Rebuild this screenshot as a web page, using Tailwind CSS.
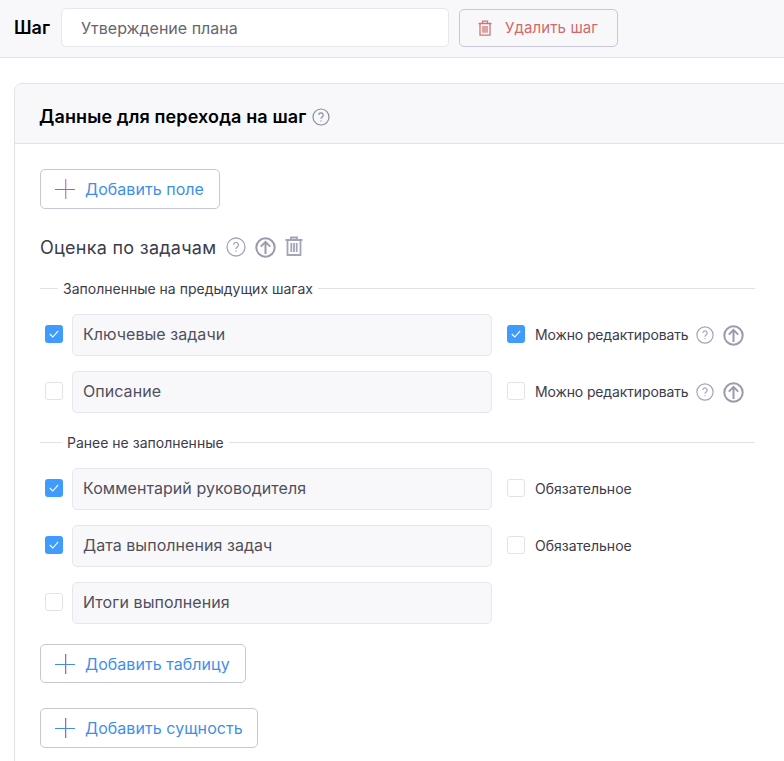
<!DOCTYPE html>
<html lang="ru">
<head>
    <meta charset="UTF-8">
    <title>Шаг</title>
    <script src="https://cdn.jsdelivr.net/npm/@tailwindcss/browser@4"></script>
</head>
<body class="bg-white font-['Inter',sans-serif] text-[#3c3c4a]">
<div class="w-[784px] h-[761px] overflow-hidden">

    <!-- step header -->
    <div class="h-[58px] bg-[#f8f8fb] border-b border-[#e2e2e6] flex items-start pl-[14px] pt-[8px]">
        <span class="text-[18px] font-semibold text-black w-[47px] mt-[8px] leading-[24px]">Шаг</span>
        <div class="w-[388px] h-[39px] bg-white border border-[#e6e6ee] rounded-[5px] pl-[19px] flex items-center text-[16px] text-[#666670]">Утверждение плана</div>
        <button class="ml-[10px] mt-[1px] w-[159px] h-[38px] border border-[#c8c6d8] rounded-[5px] flex items-center pl-[18px] text-[15px] tracking-[0.1px] text-[#d06a6a]">
            <svg class="w-[14px] h-[16px] mr-[13px]" viewBox="0 0 14 16" fill="none" stroke="#cf7474" stroke-width="1.3"><path d="M.5 3.5h13M4.5 3.5V1.2h5v2.3M2 3.5v11.7h10V3.5M5 6v6.8M7 6v6.8M9 6v6.8"/></svg>
            Удалить шаг
        </button>
    </div>

    <!-- card -->
    <div class="ml-[14px] mt-[25px] w-[800px] h-[700px] border border-[#e2e2e8] rounded-t-[8px]">
        <div class="h-[60px] bg-[#f8f8fb] border-b border-[#e2e2e8] rounded-t-[8px] flex items-center pl-[24px] pt-[6px]">
            <span class="text-[18px] font-semibold tracking-[0.12px] text-black">Данные для перехода на шаг</span>
            <svg class="ml-[6px] w-[18px] h-[18px]" viewBox="0 0 18 18" fill="none" stroke="#8a8aa0" stroke-width="1.2"><circle cx="9" cy="9" r="8"/><path d="M6.8 7a2.2 2.2 0 1 1 3.4 1.9c-.8.5-1.2.9-1.2 1.8M9 12.4v1"/></svg>
        </div>

        <div class="pl-[25px] pt-[25px]">
            <button class="w-[180px] h-[40px] border border-[#c8c6d8] rounded-[5px] flex items-center pl-[14px] text-[16px] tracking-[0.05px] text-[#3f8fe8]">
                <svg class="w-[20px] h-[20px] mr-[10px]" viewBox="0 0 20 20" stroke-width="1"><path d="M10.5 0v20" stroke="#b48ad0"/><path d="M11.5 0v20" stroke="#f0d4ec"/><path d="M0 10.5h20" stroke="#3f8fe8"/></svg>
                Добавить поле
            </button>

            <div class="mt-[26px] flex items-center h-[24px]">
                <span class="text-[18px] tracking-[0.27px] text-[#3c3c4a]">Оценка по задачам</span>
                <svg class="ml-[10px] w-[20px] h-[20px]" viewBox="0 0 20 20" fill="none" stroke="#a4a4b8" stroke-width="1.3"><circle cx="10" cy="10" r="9"/><path d="M7.6 7.8a2.4 2.4 0 1 1 3.7 2.1c-.9.6-1.3 1-1.3 2M10 13.6v1.1"/></svg>
                <svg class="ml-[9px] w-[21px] h-[21px]" viewBox="0 0 21 21" fill="none" stroke="#9a9ab0" stroke-width="2"><circle cx="10.5" cy="10.5" r="9.2"/><path d="M10.5 17V5M5.8 9.6l4.7-4.7 4.7 4.7"/></svg>
                <svg class="ml-[9px] w-[18px] h-[20px] -mt-[3px]" viewBox="0 0 18 20" fill="none" stroke="#a4a4b8" stroke-width="1.8"><path d="M.5 4h17M6 4V1.5h6V4M2.5 4v15h13V4M6.3 7v9M9 7v9M11.7 7v9"/></svg>
            </div>

            <div class="mt-[23px] w-[715px] h-[12px] flex items-center text-[14px]">
                <div class="w-[18px] h-px bg-[#e2e2e8]"></div>
                <span class="px-[5px] leading-[12px] relative top-px">Заполненные на предыдущих шагах</span>
                <div class="flex-1 h-px bg-[#e2e2e8]"></div>
            </div>

            <!-- previously filled -->
            <div class="mt-[20px] flex flex-col gap-[15px]">
                <div class="flex items-center h-[42px]">
                    <div class="w-[18px] h-[18px] ml-[5px] mr-[9px] mb-[2px] rounded-[3px] bg-[#3f9bfc] flex items-center justify-center"><svg class="w-[10px] h-[8px]" viewBox="0 0 10 8" fill="none" stroke="#fff" stroke-width="1.1"><path d="M.8 4l3 3L9.2.8"/></svg></div>
                    <div class="w-[420px] h-[42px] bg-[#f8f8fb] border border-[#e6e6ee] rounded-[5px] pl-[10px] pb-[2px] flex items-center text-[16px] tracking-[0.05px] text-[#50505c]">Ключевые задачи</div>
                    <div class="w-[18px] h-[18px] ml-[15px] mr-[10px] mb-[2px] rounded-[3px] bg-[#3f9bfc] flex items-center justify-center"><svg class="w-[10px] h-[8px]" viewBox="0 0 10 8" fill="none" stroke="#fff" stroke-width="1.1"><path d="M.8 4l3 3L9.2.8"/></svg></div>
                    <span class="text-[14px] tracking-[-0.13px] mb-px">Можно редактировать</span>
                    <svg class="ml-[7px] w-[18px] h-[18px]" viewBox="0 0 20 20" fill="none" stroke="#a4a4b8" stroke-width="1.3"><circle cx="10" cy="10" r="9"/><path d="M7.6 7.8a2.4 2.4 0 1 1 3.7 2.1c-.9.6-1.3 1-1.3 2M10 13.6v1.1"/></svg>
                    <svg class="ml-[9px] w-[21px] h-[21px]" viewBox="0 0 21 21" fill="none" stroke="#9a9ab0" stroke-width="2"><circle cx="10.5" cy="10.5" r="9.2"/><path d="M10.5 17V5M5.8 9.6l4.7-4.7 4.7 4.7"/></svg>
                </div>
                <div class="flex items-center h-[42px]">
                    <div class="w-[18px] h-[18px] ml-[5px] mr-[9px] mb-[2px] rounded-[3px] bg-white border border-[#e2e2e8]"></div>
                    <div class="w-[420px] h-[42px] bg-[#f8f8fb] border border-[#e6e6ee] rounded-[5px] pl-[10px] pb-[2px] flex items-center text-[16px] tracking-[0.05px] text-[#50505c]">Описание</div>
                    <div class="w-[18px] h-[18px] ml-[15px] mr-[10px] mb-[2px] rounded-[3px] bg-white border border-[#e2e2e8]"></div>
                    <span class="text-[14px] tracking-[-0.13px] mb-px">Можно редактировать</span>
                    <svg class="ml-[7px] w-[18px] h-[18px]" viewBox="0 0 20 20" fill="none" stroke="#a4a4b8" stroke-width="1.3"><circle cx="10" cy="10" r="9"/><path d="M7.6 7.8a2.4 2.4 0 1 1 3.7 2.1c-.9.6-1.3 1-1.3 2M10 13.6v1.1"/></svg>
                    <svg class="ml-[9px] w-[21px] h-[21px]" viewBox="0 0 21 21" fill="none" stroke="#9a9ab0" stroke-width="2"><circle cx="10.5" cy="10.5" r="9.2"/><path d="M10.5 17V5M5.8 9.6l4.7-4.7 4.7 4.7"/></svg>
                </div>
            </div>

            <div class="mt-[23px] w-[715px] h-[12px] flex items-center text-[14px]">
                <div class="w-[22px] h-px bg-[#e2e2e8]"></div>
                <span class="px-[5px] leading-[12px] relative top-px">Ранее не заполненные</span>
                <div class="flex-1 h-px bg-[#e2e2e8]"></div>
            </div>

            <!-- not filled earlier -->
            <div class="mt-[20px] flex flex-col gap-[15px]">
                <div class="flex items-center h-[42px]">
                    <div class="w-[18px] h-[18px] ml-[5px] mr-[9px] mb-[2px] rounded-[3px] bg-[#3f9bfc] flex items-center justify-center"><svg class="w-[10px] h-[8px]" viewBox="0 0 10 8" fill="none" stroke="#fff" stroke-width="1.1"><path d="M.8 4l3 3L9.2.8"/></svg></div>
                    <div class="w-[420px] h-[42px] bg-[#f8f8fb] border border-[#e6e6ee] rounded-[5px] pl-[10px] pb-[2px] flex items-center text-[16px] tracking-[0.05px] text-[#50505c]">Комментарий руководителя</div>
                    <div class="w-[18px] h-[18px] ml-[15px] mr-[10px] mb-[2px] rounded-[3px] bg-white border border-[#e2e2e8]"></div>
                    <span class="text-[14px] mb-px">Обязательное</span>
                </div>
                <div class="flex items-center h-[42px]">
                    <div class="w-[18px] h-[18px] ml-[5px] mr-[9px] mb-[2px] rounded-[3px] bg-[#3f9bfc] flex items-center justify-center"><svg class="w-[10px] h-[8px]" viewBox="0 0 10 8" fill="none" stroke="#fff" stroke-width="1.1"><path d="M.8 4l3 3L9.2.8"/></svg></div>
                    <div class="w-[420px] h-[42px] bg-[#f8f8fb] border border-[#e6e6ee] rounded-[5px] pl-[10px] pb-[2px] flex items-center text-[16px] tracking-[0.05px] text-[#50505c]">Дата выполнения задач</div>
                    <div class="w-[18px] h-[18px] ml-[15px] mr-[10px] mb-[2px] rounded-[3px] bg-white border border-[#e2e2e8]"></div>
                    <span class="text-[14px] mb-px">Обязательное</span>
                </div>
                <div class="flex items-center h-[42px]">
                    <div class="w-[18px] h-[18px] ml-[5px] mr-[9px] mb-[2px] rounded-[3px] bg-white border border-[#e2e2e8]"></div>
                    <div class="w-[420px] h-[42px] bg-[#f8f8fb] border border-[#e6e6ee] rounded-[5px] pl-[10px] pb-[2px] flex items-center text-[16px] tracking-[0.05px] text-[#50505c]">Итоги выполнения</div>
                </div>
            </div>

            <button class="mt-[20px] w-[206px] h-[39px] border border-[#c8c6d8] rounded-[5px] flex items-center pl-[14px] text-[16px] tracking-[0.05px] text-[#3f8fe8]">
                <svg class="w-[20px] h-[20px] mr-[10px]" viewBox="0 0 20 20" stroke-width="1"><path d="M10.5 0v20" stroke="#3f8fe8"/><path d="M11.5 0v20" stroke="#f0d4ec"/><path d="M0 10.5h20" stroke="#3f8fe8"/></svg>
                Добавить таблицу
            </button>
            <button class="mt-[25px] w-[218px] h-[40px] border border-[#c8c6d8] rounded-[5px] flex items-center pl-[14px] text-[16px] tracking-[0.05px] text-[#3f8fe8]">
                <svg class="w-[20px] h-[20px] mr-[10px]" viewBox="0 0 20 20" stroke-width="1"><path d="M10.5 0v20" stroke="#3f8fe8"/><path d="M11.5 0v20" stroke="#f0d4ec"/><path d="M0 10.5h20" stroke="#3f8fe8"/></svg>
                Добавить сущность
            </button>
        </div>
    </div>
</div>
</body>
</html>
